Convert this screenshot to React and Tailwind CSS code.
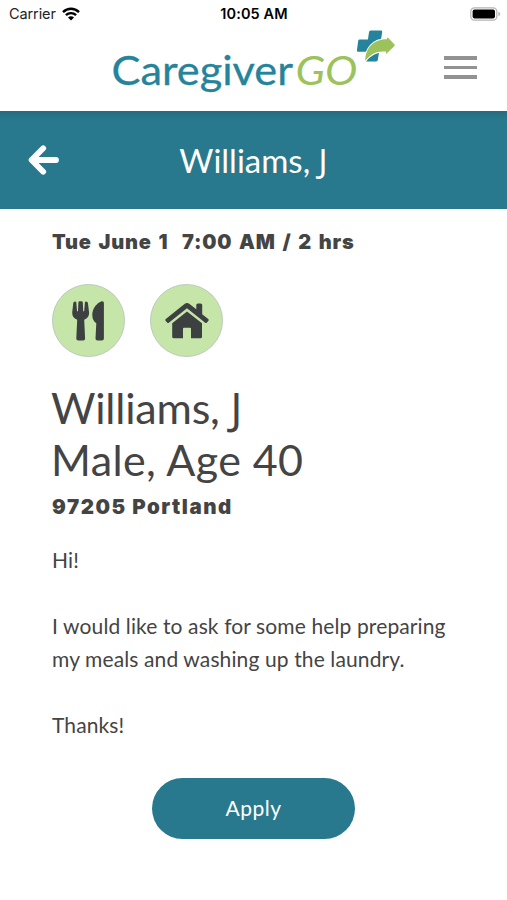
const SERVICES = [
  { id: 'meals', label: 'Meals', Icon: MealsIcon },
  { id: 'home', label: 'Housekeeping', Icon: HomeIcon },
];

function WifiIcon() {
  return (
    <svg width="18" height="14" viewBox="0 0 18 14" fill="none" stroke="#000" strokeWidth="2.4" aria-hidden="true">
      <path d="M1 5.1C5.6.7 12.4.7 17 5.1" />
      <path d="M3.9 8.2c2.9-2.8 7.3-2.8 10.2 0" />
      <path d="M9 13.6 6 10.6c1.7-1.7 4.3-1.7 6 0z" fill="#000" stroke="none" />
    </svg>
  );
}

function BatteryIcon() {
  return (
    <svg width="31" height="14" viewBox="0 0 31 14" fill="none" aria-hidden="true">
      <rect x=".8" y=".8" width="26" height="12.4" rx="3.6" stroke="#b4b4b4" strokeWidth="1.2" />
      <rect x="2.6" y="2.6" width="22.4" height="8.8" rx="1.8" fill="#000" />
      <path d="M28.4 4.7c1.1.5 1.8 1.3 1.8 2.3s-.7 1.8-1.8 2.3z" fill="#b4b4b4" />
    </svg>
  );
}

function Logo() {
  return (
    <svg width="284" height="68" viewBox="112 28 284 68" role="img" aria-label="Caregiver GO">
      <text x="111.5" y="84.5" textLength="181.5" lengthAdjust="spacingAndGlyphs" fontSize="40.5" fill="#25849b" stroke="#25849b" strokeWidth=".3" className="font-['Lato',sans-serif]">
        Caregiver
      </text>
      <text x="295.5" y="84.5" textLength="62" lengthAdjust="spacingAndGlyphs" fontSize="40.5" fontStyle="italic" fill="#9cc25b" className="font-['Lato',sans-serif]">
        GO
      </text>
      {/* cross */}
      <path
        d="M371 30.5h10q1.4 0 1.2 1.4l-1.2 7.6 8 .1-1.5 12.4-8.4.1-1.3 8q-.3 1.4-1.6 1.4h-9.5q-1.2 0-1-1.3l1.2-8.4h-8.7q-1.5 0-1.3-1.3l1.3-9.7q.2-1.2 1.5-1.2h8.2l1.2-7.9q.3-1.2 1.9-1.2z"
        fill="#25849b"
      />
      {/* arrow */}
      <path
        d="M365.3 60.8c0-12 7.8-21.7 21.5-21.5l.3-1.3q.2-.9 1-.2l6.4 6.8q.6.7-.1 1.3l-7.7 7.6q-.9.6-.8-.5l.2-1.4c-9.3-1-15.2 2-20.8 9.2z"
        fill="#9cc25b"
        stroke="#fff"
        strokeWidth="2"
        paintOrder="stroke"
      />
    </svg>
  );
}

function BackIcon() {
  return (
    <svg width="31" height="30" viewBox="0 0 31 30" fill="none" stroke="#fff" strokeWidth="5.8" strokeLinecap="round" strokeLinejoin="round" aria-hidden="true">
      <path d="M15.2 3.3 3.6 15l11.6 11.7M4 15h24" />
    </svg>
  );
}

function MealsIcon() {
  return (
    <svg width="34" height="40" viewBox="0 0 34 40" fill="#3c4040" aria-hidden="true">
      <path d="M2.300.8q1.500-.7 2 .5l.7 8.700q.5.900 1 0L6.400 1.200q.1-1 1.300-1h1.700q1.300 0 1.400 1l.4 8.800q.5.900 1 0l.7-8.700q.5-1.200 2-.5.9.3 1 1.300l1.200 9.400q.2 5.200-4.900 7.300l.9 18.700q0 2-2 2H6.300q-2 0-2-2l.9-18.700Q0 16.700.2 11.500L1.300 2.100q.1-1 1-1.300z" />
      <path d="M29.600.3q2.300-.5 2.300 1.700v35.500q0 2-2 2h-4.400q-2 0-2-2l.8-15.200q-4-3-4-8.300 0-5.200 3.200-9.300Q26 1.400 29.600.3z" />
    </svg>
  );
}

function HomeIcon() {
  return (
    <svg width="44" height="36" viewBox="0 0 44 36" fill="#3c4040" aria-hidden="true">
      <path d="M19.500 1q2.500-1.800 5 0l6.800 5.300V2q0-1.600 1.600-1.600h2.700q1.600 0 1.600 1.600v9.200l6 4.800q.9.800.2 1.700l-1.500 1.800q-.8.900-1.700.2L22 5.200 3.800 19.700q-.9.700-1.700-.2L.6 17.700q-.7-.9.200-1.700z" />
      <path d="M22 8.500 37 20.300v13.400q0 1.600-1.600 1.600H26v-9.500q0-1-1-1h-6q-1 0-1 1v9.500H8.800q-1.600 0-1.600-1.600V20.300z" />
    </svg>
  );
}

function StatusBar() {
  return (
    <div className="grid h-7 grid-cols-3 items-center pl-[9px] pr-[6px] font-['Inter',sans-serif] text-[14.5px] text-black">
      <div className="flex items-center gap-[6px]">
        <span className="tracking-[-0.1px] text-[#222]">Carrier</span>
        <WifiIcon />
      </div>
      <span className="-ml-[2px] text-center font-semibold tracking-[0.1px]">10:05 AM</span>
      <div className="flex justify-end">
        <BatteryIcon />
      </div>
    </div>
  );
}

function NavBar() {
  return (
    <header className="flex h-[83px] items-start justify-between pl-[112px] pr-[30px]">
      <Logo />
      <button type="button" aria-label="Menu" className="mt-[28px] flex w-[33px] flex-col gap-[6px]">
        <span className="h-[3.5px] bg-[#929292]" />
        <span className="h-[3.5px] bg-[#929292]" />
        <span className="h-[3.5px] bg-[#929292]" />
      </button>
    </header>
  );
}

// The J of the heading face hangs below the baseline
function ClientName() {
  return (
    <>
      Williams, <span className="font-['Noto_Sans',sans-serif]">J</span>
    </>
  );
}

export default function App() {
  return (
    <div className="flex min-h-[900px] w-full flex-col bg-white font-['Lato',sans-serif] text-[#444]">
      <StatusBar />
      <NavBar />

      <div className="grid h-[98px] grid-cols-[60px_1fr_60px] items-center bg-[#29798e] bg-linear-to-b from-[#246c7f] to-[#29798e] to-10% text-white">
        <button type="button" aria-label="Back" className="pl-[28px]">
          <BackIcon />
        </button>
        <h1 className="text-center text-[33px] leading-none">
          <ClientName />
        </h1>
      </div>

      <main className="flex flex-col px-[52px] pt-[16px]">
        <p className="whitespace-pre font-['Inter',sans-serif] text-[20px] leading-[34px] font-black tracking-[0.8px] [word-spacing:2px]">Tue June 1  7:00 AM / 2 hrs</p>

        <div className="mt-[25px] flex gap-[25px]">
          {SERVICES.map(({ id, label, Icon }) => (
            <div
              key={id}
              title={label}
              className="flex size-[73px] items-center justify-center rounded-full border border-[#bccabb] bg-[#c5e5a9]"
            >
              <Icon />
            </div>
          ))}
        </div>

        <h2 className="mt-[25px] -ml-px text-[43px] leading-[52px]">
          <span className="tracking-[-0.2px]">
            <ClientName />
          </span>
          <br />
          <span className="tracking-[0.4px]">Male, Age 40</span>
        </h2>
        <p className="font-['Inter',sans-serif] text-[20.5px] leading-[42px] font-black tracking-[1.5px]">97205 Portland</p>

        <p className="mt-[15px] whitespace-pre-line text-[21px] leading-[33px] tracking-[0.12px]">
          {'Hi!\n\nI would like to ask for some help preparing\nmy meals and washing up the laundry.\n\nThanks!'}
        </p>

        <button type="button" className="mt-[37px] h-[61px] w-[203px] self-center rounded-full bg-[#29798e] pb-[2px] text-[21px] tracking-[0.5px] text-white">
          Apply
        </button>
      </main>
    </div>
  );
}
